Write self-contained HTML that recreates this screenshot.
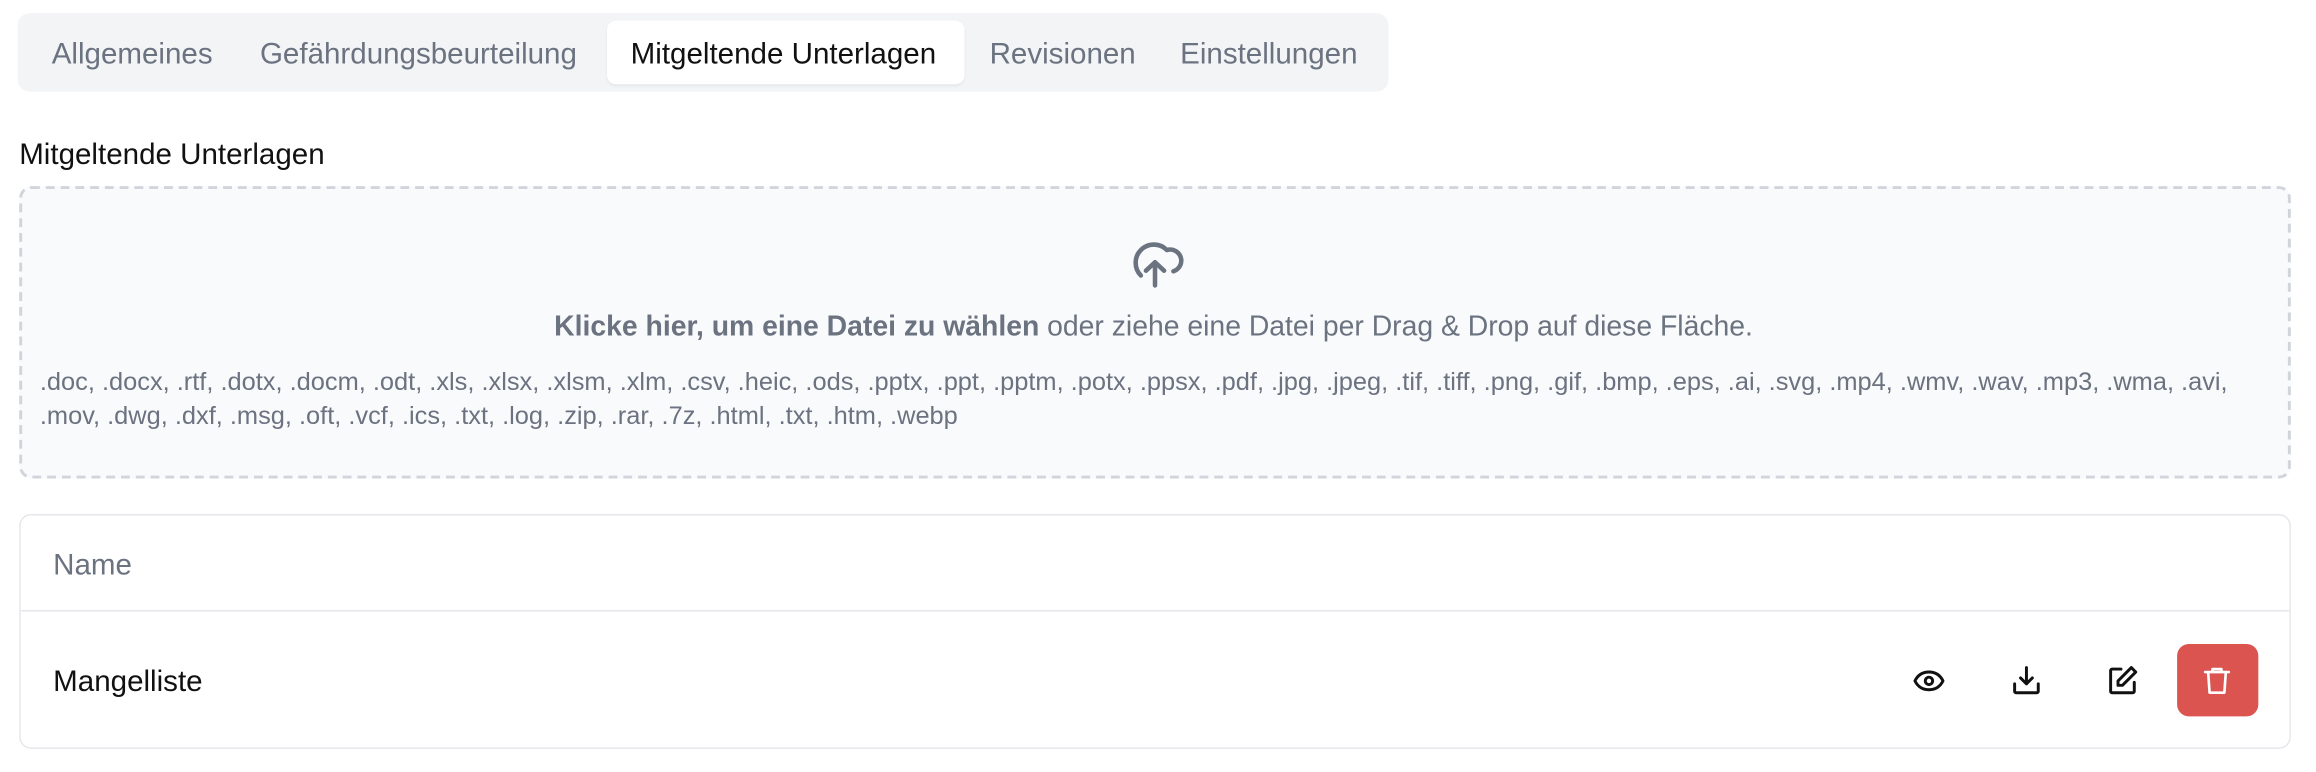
<!DOCTYPE html>
<html><head><meta charset="utf-8"><style>
html,body{margin:0;padding:0;background:#fff;width:2316px;height:772px;overflow:hidden}
#w{position:absolute;left:0;top:0;width:1568px;height:523px;transform:scale(1.477);transform-origin:0 0;font-family:"Liberation Sans",sans-serif}
.a{position:absolute;white-space:nowrap}
.tabs{left:12px;top:9px;width:928px;height:53px;background:#f3f4f6;border-radius:8px}
.tab{top:11px;line-height:53px;font-size:20px;color:#6b7280}
.act{left:411px;top:14px;width:242px;height:43px;background:#fff;border-radius:6px;box-shadow:0 1px 2px rgba(0,0,0,.06)}
.dz{left:13px;top:126px;width:1534px;height:194px;border:2px dashed #d1d5db;border-radius:8px;background:#f9fafb}
.tbl{left:13px;top:348px;width:1536px;height:157px;border:1px solid #e5e7eb;border-radius:8px}
</style></head><body><div id="w">
<div class="a tabs"></div>
<div class="a act"></div>
<div class="a tab" style="left:35px">Allgemeines</div>
<div class="a tab" style="left:176px">Gefährdungsbeurteilung</div>
<div class="a tab" style="left:427px;color:#111">Mitgeltende Unterlagen</div>
<div class="a tab" style="left:670px">Revisionen</div>
<div class="a tab" style="left:799px">Einstellungen</div>
<div class="a" style="left:13px;top:93px;line-height:24px;font-size:20px;color:#111">Mitgeltende Unterlagen</div>
<div class="a dz"></div>
<svg class="a" style="left:759px;top:153px" width="46" height="46" viewBox="0 0 24 24" fill="none" stroke="#6b7280" stroke-width="1.6" stroke-linecap="round" stroke-linejoin="round"><path d="M7 17.5A5.8 5.8 0 1 1 16.2 8.5 3.8 3.8 0 0 1 18.5 16"/><path d="M12 21v-8M8.8 15.8 12 12.8l3.2 3"/></svg>
<div class="a" style="left:0;width:1562px;text-align:center;top:210px;line-height:24px;font-size:19.2px;color:#6b7280"><b>Klicke hier, um eine Datei zu wählen</b> oder ziehe eine Datei per Drag &amp; Drop auf diese Fläche.</div>
<div class="a" style="left:27px;top:247px;width:1520px;font-size:17.2px;line-height:23px;color:#6b7280">.doc, .docx, .rtf, .dotx, .docm, .odt, .xls, .xlsx, .xlsm, .xlm, .csv, .heic, .ods, .pptx, .ppt, .pptm, .potx, .ppsx, .pdf, .jpg, .jpeg, .tif, .tiff, .png, .gif, .bmp, .eps, .ai, .svg, .mp4, .wmv, .wav, .mp3, .wma, .avi,<br>.mov, .dwg, .dxf, .msg, .oft, .vcf, .ics, .txt, .log, .zip, .rar, .7z, .html, .txt, .htm, .webp</div>
<div class="a tbl"></div>
<div class="a" style="left:14px;top:413px;width:1536px;height:1px;background:#e5e7eb"></div>
<div class="a" style="left:36px;top:371px;line-height:24px;font-size:20px;color:#6b7280">Name</div>
<div class="a" style="left:36px;top:450px;line-height:24px;font-size:20px;color:#111">Mangelliste</div>
<svg class="a" style="left:1294px;top:449px" width="24" height="24" viewBox="0 0 24 24" fill="none" stroke="#111" stroke-width="2" stroke-linecap="round" stroke-linejoin="round"><path d="M2.5 12C4.5 8 8 6 12 6s7.5 2 9.5 6c-2 4-5.5 6-9.5 6s-7.5-2-9.5-6z"/><circle cx="12" cy="12" r="2.5"/></svg>
<svg class="a" style="left:1360px;top:449px" width="24" height="24" viewBox="0 0 24 24" fill="none" stroke="#111" stroke-width="2" stroke-linecap="round" stroke-linejoin="round"><path d="M12 3v11M8 10l4 4 4-4M4 14v5a1 1 0 0 0 1 1h14a1 1 0 0 0 1-1v-5"/></svg>
<svg class="a" style="left:1425px;top:449px" width="24" height="24" viewBox="0 0 24 24" fill="none" stroke="#111" stroke-width="2" stroke-linecap="round" stroke-linejoin="round"><path d="M11 4H5a1 1 0 0 0-1 1v14a1 1 0 0 0 1 1h14a1 1 0 0 0 1-1v-6"/><path d="M18 3l3 3-9 9H9v-3z"/></svg>
<div class="a" style="left:1474px;top:436px;width:55px;height:49px;background:#dc5450;border-radius:8px"></div>
<svg class="a" style="left:1489px;top:449px" width="24" height="24" viewBox="0 0 24 24" fill="none" stroke="#fff" stroke-width="1.8" stroke-linecap="round" stroke-linejoin="round"><path d="M4 6h16M9 6V4h6v2M6 6l1 14h10l1-14"/></svg>
</div></body></html>
